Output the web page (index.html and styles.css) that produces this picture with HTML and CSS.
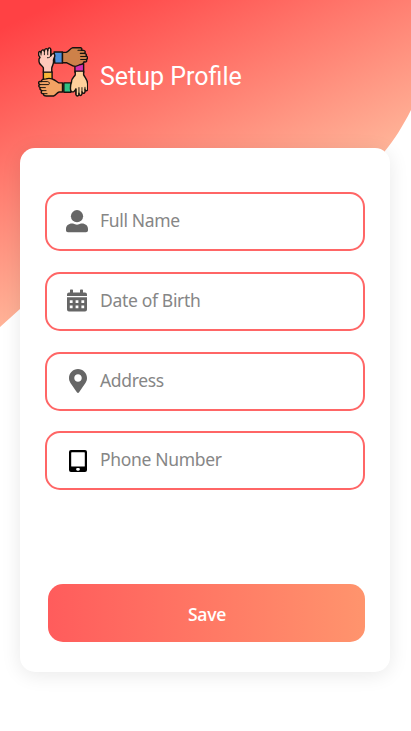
FILE: index.html
```html
<!DOCTYPE html>
<html lang="en">
<head>
<meta charset="utf-8">
<meta name="viewport" content="width=device-width, initial-scale=1">
<title>Setup Profile</title>
<link rel="stylesheet" href="styles.css">
</head>
<body>
<main class="screen">
  <svg class="backdrop" viewBox="0 0 411 340" aria-hidden="true">
    <defs>
      <linearGradient id="glow" gradientUnits="userSpaceOnUse" x1="11" y1="24" x2="128" y2="274">
        <stop offset="0" stop-color="#ff4144"/>
        <stop offset="1" stop-color="#ffb599"/>
      </linearGradient>
    </defs>
    <path fill="url(#glow)" d="M0 0H411V110C403 126 394 140 385 151C350 193 300 216 220 220C130 225 60 272 20 309L0 327Z"/>
  </svg>
  <header class="header">
    <svg class="logo" viewBox="24 22 149 149" fill="none" stroke="#17120f" stroke-width="4.2" stroke-linejoin="round" stroke-linecap="round" aria-hidden="true">
      <path fill="#4c8fdb" d="M72 37H97V70H74Z"/>
      <path fill="#d42fb0" d="M134 72H160V97H134Z"/>
      <path fill="#2fc184" d="M101 129H122V157H101Z"/>
      <path fill="#f7b637" d="M40 96H66V122H40Z"/>
      <path fill="#cd8149" d="M97 38H108C116 35 119 26 128 24H150C155 24 156 29 153 32H160C166 33 166 39 162 41C169 42 170 48 166 50C174 50 174 57 168 59C171 66 166 68 161 66C160 73 155 74 148 75C142 79 132 80 128 78L110 69H97Z"/>
      <path stroke-width="3" d="M143 32H154M150 41H163M151 50H167M151 59H168"/>
      <path fill="#ffc9bb" d="M40 97V84C36 76 27 74 27 65V58L30 53L26 47V39C27 34 32 35 33 39C33 29 42 28 43 35C44 25 52 24 53 33C54 22 62 23 62 30V49C66 40 73 40 74 46C75 52 70 56 70 63C72 72 66 78 65 85V97Z"/>
      <path stroke-width="2.800" d="M33 39V46M43 34V45M53 31V45M62 30V48C60 53 57 54 52 54"/>
      <path fill="#f3a263" d="M97 129H86C80 127 76 120 68 118C61 115 54 115 48 117C39 117 34 120 34 125H29C24 126 25 133 30 134C24 136 26 142 31 143C28 147 31 151 36 152C31 157 35 161 40 161C40 166 44 168 49 168H71C77 165 80 158 87 156H97Z"/>
      <path stroke-width="2.800" d="M34 125H53C57 126 60 130 56 134H29M31 143H46M36 152H48M40 161H51"/>
      <path fill="#ffd09b" d="M135 94H160V105C165 115 173 120 172 134V148C171 154 165 154 164 148V156C162 162 156 161 155 155V162C152 169 146 167 146 160V164C143 170 138 169 137 163V148L131 155C126 157 121 155 121 149C120 139 122 131 124 126C123 116 132 111 135 105Z"/>
      <path stroke-width="2.800" d="M164 148V142M155 154V143M146 161V143M137 163V146"/>
    </svg>
    <h1 class="title">Setup Profile</h1>
  </header>
  <form class="card">
    <div class="fields">
      <label class="field">
        <svg class="icon" viewBox="0 0 24 24" fill="#666" aria-hidden="true"><circle cx="12" cy="6.200" r="6.100"/><path d="M7 13.600H8C10.700 15 13.300 15 16 13.600H17C20.500 13.600 23 16 23 19V20.200C23 21.400 22.200 22.200 21 22.200H3C1.800 22.200 1 21.400 1 20.200V19C1 16 3.500 13.600 7 13.600Z"/></svg>
        <span class="placeholder">Full Name</span>
      </label>
      <label class="field">
        <svg class="icon" viewBox="0 0 24 24" fill="#666" aria-hidden="true"><path fill-rule="evenodd" d="M5.500 0.500H7.300Q8 0.500 8 1.200V3.500H15V1.200Q15 .5 15.700 .5H17.300Q18 .5 18 1.200V3.500H20Q22 3.500 22 5.500V7H2V5.500Q2 3.500 4 3.500H5V1.200Q5 .5 5.500 .5ZM2 8.200H22V20.500Q22 22.500 20 22.500H4Q2 22.500 2 20.500ZM4.800 11.300V14.100H7.600V11.300ZM10.600 11.300V14.100H13.400V11.300ZM16.400 11.300V14.100H19.200V11.300ZM4.800 16.500V19.300H7.600V16.500ZM10.600 16.500V19.300H13.400V16.500ZM16.400 16.500V19.300H19.200V16.500Z"/></svg>
        <span class="placeholder">Date of Birth</span>
      </label>
      <label class="field">
        <svg class="icon pin" viewBox="-64 0 512 512" fill="#666" aria-hidden="true"><path d="M172.268 501.67C26.97 291.031 0 269.413 0 192 0 85.961 85.961 0 192 0s192 85.961 192 192c0 77.413-26.97 99.031-172.268 309.67-9.535 13.774-29.93 13.773-39.464 0zM192 272c44.183 0 80-35.817 80-80s-35.817-80-80-80-80 35.817-80 80 35.817 80 80 80z"/></svg>
        <span class="placeholder">Address</span>
      </label>
      <label class="field">
        <svg class="icon" viewBox="0 0 24 24" fill="#000" aria-hidden="true"><path fill-rule="evenodd" d="M6 1H20Q22 1 22 3V21Q22 23 20 23H6Q4 23 4 21V3Q4 1 6 1ZM6.800 3.200Q6.200 3.200 6.200 3.800V17Q6.200 17.600 6.800 17.600H19.200Q19.800 17.600 19.800 17V3.800Q19.800 3.200 19.200 3.200ZM12.500 18.900A1.400 1.400 0 0 0 12.500 21.700H13.500A1.400 1.400 0 0 0 13.500 18.900Z"/></svg>
        <span class="placeholder">Phone Number</span>
      </label>
    </div>
    <button class="save" type="button">Save</button>
  </form>
</main>
</body>
</html>
```
FILE: styles.css
```css
* { box-sizing: border-box; }
body { margin: 0; background: #fff; }
.screen {
  position: relative;
  width: 411px;
  height: 731px;
  overflow: hidden;
}
.backdrop {
  position: absolute;
  top: 0;
  left: 0;
  width: 411px;
  height: 340px;
}
.header {
  position: relative;
  display: flex;
  gap: 12px;
  height: 148px;
  padding: 47px 0 0 38px;
}
.logo { width: 50px; height: 50px; }
.title {
  margin: 15px 0 0;
  color: #fff;
  font: 400 25px/30px Roboto, sans-serif;
}
.card {
  position: relative;
  display: flex;
  flex-direction: column;
  justify-content: space-between;
  width: 370px;
  height: 524px;
  margin-left: 20px;
  padding: 44px 25px 30px;
  border-radius: 15px;
  background: #fff;
  box-shadow: 0 3px 20px rgba(0, 0, 0, .09);
}
.fields {
  display: grid;
  gap: 20.8px;
}
.field {
  display: flex;
  align-items: center;
  gap: 11px;
  height: 59px;
  padding: 0 18px;
  border: 2px solid #ff6666;
  border-radius: 15px;
}
.icon { flex: none; width: 24px; height: 24px; }
.pin { transform: translateX(1px); }
.placeholder {
  margin-bottom: 3px;
  color: #868686;
  font: 400 17.5px/24px "Noto Sans", "Open Sans", sans-serif;
  letter-spacing: -.33px;
}
.save {
  width: 317px;
  height: 58px;
  margin: 0 0 0 3px;
  padding: 1px 0 0 1px;
  border: 0;
  border-radius: 15px;
  background: linear-gradient(90deg, #ff5c5c, #ff946d);
  color: #fff;
  font: 600 17.5px/24px "Open Sans", "Noto Sans", sans-serif;
  letter-spacing: -.3px;
}
```
